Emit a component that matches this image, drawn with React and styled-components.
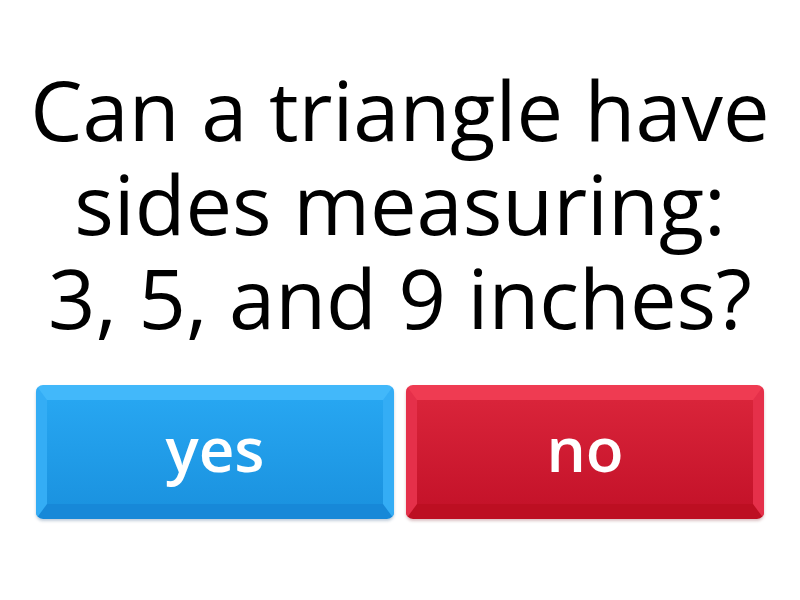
import React from "react";
import styled, { createGlobalStyle } from "styled-components";

const Global = createGlobalStyle`
  html, body { margin: 0; padding: 0; background: #ffffff; }
  body { font-family: "Open Sans", sans-serif; }
`;

const Page = styled.div`
  width: 800px;
  height: 600px;
  display: flex;
  flex-direction: column;
  background: #ffffff;
`;

const Question = styled.div`
  height: 385px;
  display: flex;
  flex-direction: column;
  align-items: center;
  justify-content: center;
  text-align: center;
  font-family: "Open Sans", sans-serif;
  font-size: 83px;
  color: #000;
  padding-top: 20px;
  box-sizing: border-box;
`;

const Line = styled.div`
  line-height: 94px;
  white-space: nowrap;
`;

const Answers = styled.div`
  display: grid;
  grid-template-columns: 1fr 1fr;
  gap: 12px;
  padding: 0 36px;
`;

const palettes = {
  blue: {
    top: "#42b8fa",
    side: "#34adf5",
    bottom: "#1788d8",
    from: "#27a6f1",
    to: "#1b93e0",
    shadow: "rgba(10, 60, 110, 0.25)",
  },
  red: {
    top: "#ef3b52",
    side: "#e5304a",
    bottom: "#bd0f22",
    from: "#d9243a",
    to: "#c5132a",
    shadow: "rgba(110, 10, 20, 0.25)",
  },
};

const AnswerButton = styled.button`
  height: 134px;
  box-sizing: border-box;
  border-style: solid;
  border-width: 15px 11px 15px 11px;
  border-top-color: ${(p) => palettes[p.$tone].top};
  border-left-color: ${(p) => palettes[p.$tone].side};
  border-right-color: ${(p) => palettes[p.$tone].side};
  border-bottom-color: ${(p) => palettes[p.$tone].bottom};
  border-radius: 7px;
  background: linear-gradient(
    ${(p) => palettes[p.$tone].from},
    ${(p) => palettes[p.$tone].to}
  );
  box-shadow: 0 2px 3px ${(p) => palettes[p.$tone].shadow};
  color: #ffffff;
  font-family: "Open Sans", sans-serif;
  font-weight: 600;
  font-size: 62px;
  line-height: 1;
  padding: 0 0 8px 0;
  display: flex;
  align-items: center;
  justify-content: center;
  cursor: pointer;
`;

export default function App() {
  return (
    <>
      <Global />
      <Page>
        <Question>
          <Line>Can a triangle have</Line>
          <Line>sides measuring:</Line>
          <Line>3, 5, and 9 inches?</Line>
        </Question>
        <Answers>
          <AnswerButton $tone="blue">yes</AnswerButton>
          <AnswerButton $tone="red">no</AnswerButton>
        </Answers>
      </Page>
    </>
  );
}
